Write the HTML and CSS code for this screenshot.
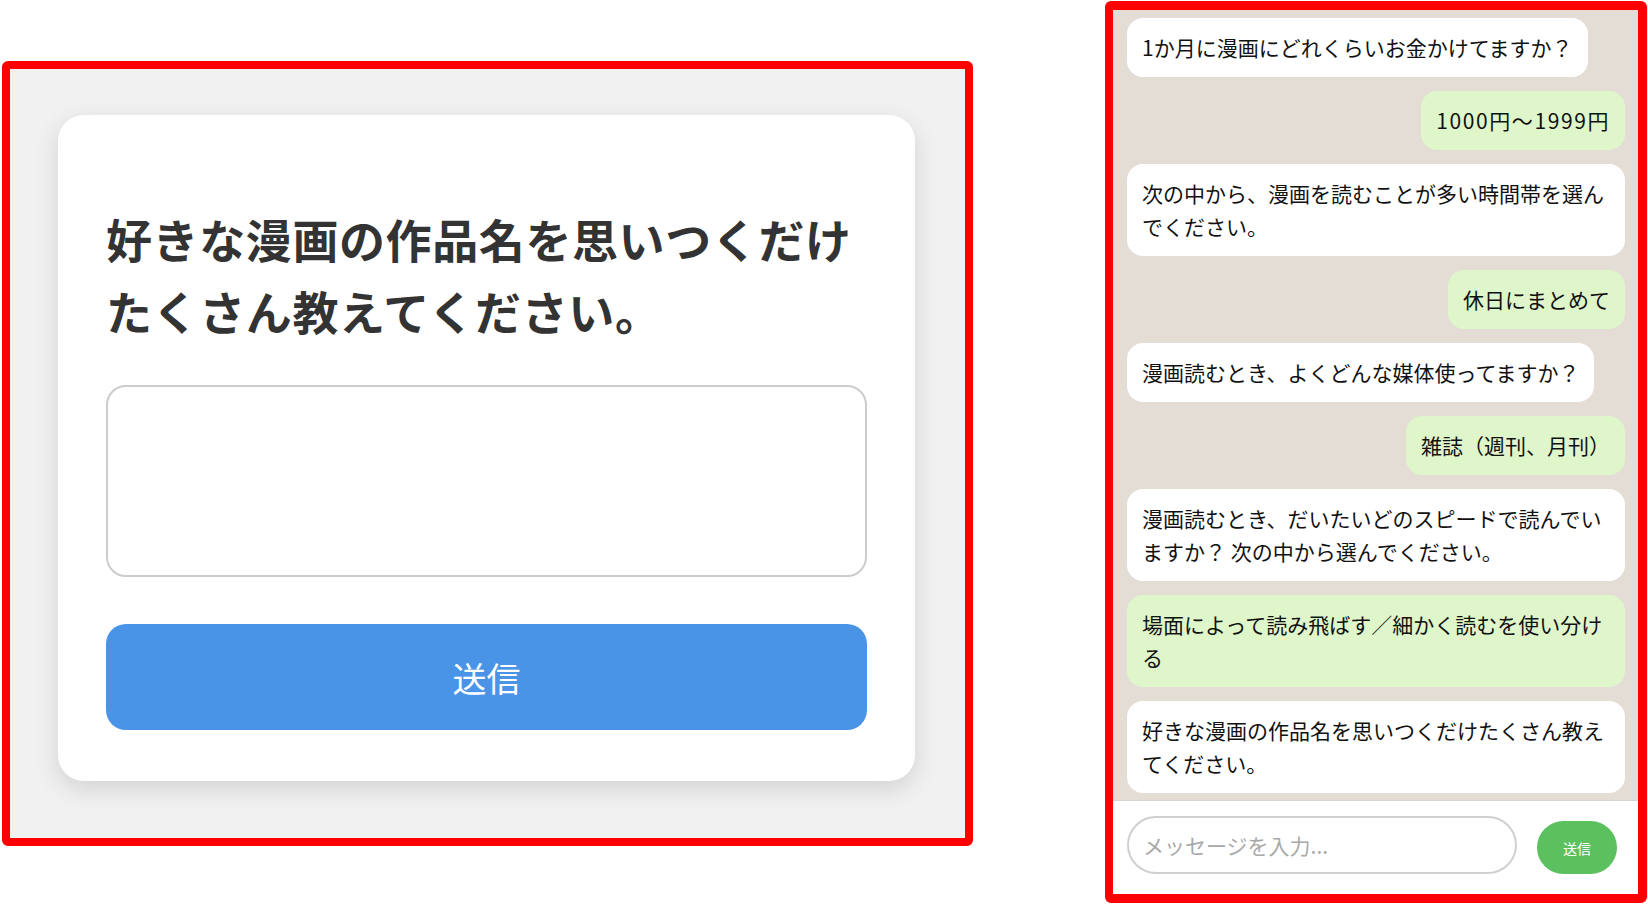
FILE: index.html
```html
<!DOCTYPE html>
<html lang="ja">
<head>
<meta charset="utf-8">
<title>アンケート</title>
<link rel="stylesheet" href="styles.css">
</head>
<body>
<div class="page">
  <section class="frame form-frame">
    <div class="card">
      <h2 class="question">好きな漫画の作品名を思いつくだけたくさん教えてください。</h2>
      <textarea class="answer"></textarea>
      <button class="submit">送信</button>
    </div>
  </section>
  <section class="frame chat-frame">
    <div class="messages">
      <div class="msg bot">1か月に漫画にどれくらいお金かけてますか？</div>
      <div class="msg user wide-digits">1000円〜1999円</div>
      <div class="msg bot">次の中から、漫画を読むことが多い時間帯を選んでください。</div>
      <div class="msg user">休日にまとめて</div>
      <div class="msg bot">漫画読むとき、よくどんな媒体使ってますか？</div>
      <div class="msg user">雑誌（週刊、月刊）</div>
      <div class="msg bot">漫画読むとき、だいたいどのスピードで読んでいますか？ 次の中から選んでください。</div>
      <div class="msg user">場面によって読み飛ばす／細かく読むを使い分ける</div>
      <div class="msg bot">好きな漫画の作品名を思いつくだけたくさん教えてください。</div>
    </div>
    <div class="composer">
      <input class="composer-input" type="text" placeholder="メッセージを入力...">
      <button class="composer-send">送信</button>
    </div>
  </section>
</div>
</body>
</html>
```
FILE: styles.css
```css
* { box-sizing: border-box; }
html, body { margin: 0; padding: 0; background: #ffffff; }
body {
  font-family: "Noto Sans CJK JP", "Noto Sans", sans-serif;
  color: #111;
}
.page {
  display: flex;
  align-items: flex-start;
  width: 1648px;
  height: 905px;
  overflow: hidden;
}
.frame {
  border-style: solid;
  border-color: #ff0000;
  border-radius: 6px;
}
.form-frame {
  margin-left: 2px;
  margin-top: 61px;
  width: 971px;
  height: 785px;
  border-width: 8px;
  background: #f1f1f1;
  padding: 46px 50px 57px 48px;
  display: flex;
}
.card {
  flex: 1;
  background: #ffffff;
  border-radius: 26px;
  box-shadow: 0 8px 24px rgba(0, 0, 0, 0.13);
  padding: 48px 48px 50px 48px;
  display: flex;
  flex-direction: column;
}
.question {
  margin: 39px 0 39px 0;
  font-size: 46px;
  line-height: 72px;
  letter-spacing: 0.6px;
  font-weight: 700;
  color: #333333;
}
.answer {
  display: block;
  width: 100%;
  height: 192px;
  border: 2px solid #cccccc;
  border-radius: 20px;
  resize: none;
  font-family: inherit;
  font-size: 24px;
  padding: 12px;
  background: #fff;
}
.submit {
  margin-top: 47px;
  height: 106px;
  width: 100%;
  border: none;
  border-radius: 20px;
  background: #4a94e8;
  color: #ffffff;
  font-family: inherit;
  font-size: 34px;
  font-weight: 400;
}
.chat-frame {
  margin-left: 132px;
  margin-top: 1px;
  width: 542px;
  height: 902px;
  border-width: 9px 9px 9px 8px;
  display: flex;
  flex-direction: column;
  overflow: hidden;
}
.messages {
  height: 790px;
  background: #e3ddd6;
  padding: 8px 13px 0 14px;
  display: flex;
  flex-direction: column;
  align-items: flex-start;
  gap: 14px;
  overflow: hidden;
}
.msg {
  font-size: 21px;
  line-height: 33px;
  padding: 13px 15px;
  border-radius: 16px;
  max-width: 100%;
  color: #111;
}
.msg.bot { background: #ffffff; }
.msg.user { background: #dff6ca; align-self: flex-end; }
.msg.wide-digits { letter-spacing: 1.6px; }
.composer {
  flex: 1;
  background: #ffffff;
  border-top: 1px solid #d9d4ce;
  display: flex;
  align-items: center;
  gap: 20px;
  padding: 0 20px 6px 14px;
}
.composer-input {
  width: 390px;
  height: 58px;
  border: 2px solid #d0d0d0;
  border-radius: 29px;
  padding: 0 14px;
  font-family: inherit;
  font-size: 21px;
  color: #111;
  outline: none;
  background: #fff;
}
.composer-input::placeholder { color: #a9a9a9; }
.composer-send {
  width: 80px;
  height: 53px;
  margin-top: 6px;
  border: none;
  border-radius: 27px;
  background: #5bc15f;
  color: #ffffff;
  font-family: inherit;
  font-size: 14px;
}
```
